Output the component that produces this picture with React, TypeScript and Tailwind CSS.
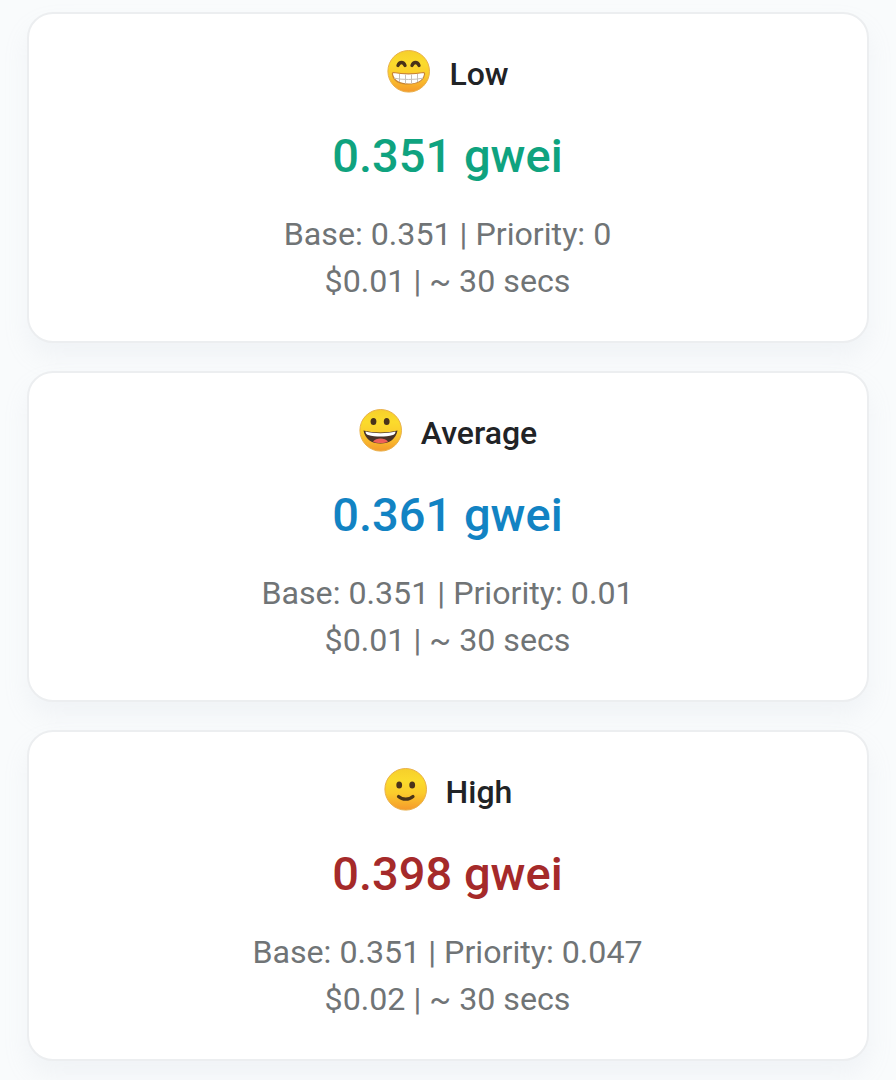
type Mood = 'grin' | 'open' | 'smile';

interface GasTier {
  id: string;
  label: string;
  mood: Mood;
  price: string;
  color: string;
  base: string;
  priority: string;
  cost: string;
}

const tiers: GasTier[] = [
  { id: 'low', label: 'Low', mood: 'grin', price: '0.351', color: 'text-[#0fa37f]', base: '0.351', priority: '0', cost: '$0.01' },
  { id: 'average', label: 'Average', mood: 'open', price: '0.361', color: 'text-[#1283c3]', base: '0.351', priority: '0.01', cost: '$0.01' },
  { id: 'high', label: 'High', mood: 'smile', price: '0.398', color: 'text-[#a52a2a]', base: '0.351', priority: '0.047', cost: '$0.02' },
];

function Face({ mood }: { mood: Mood }) {
  return (
    <svg viewBox="0 0 44 44" className="h-11 w-11 shrink-0" aria-hidden="true">
      <defs>
        <linearGradient id={`face-${mood}`} x1="0" y1="0" x2="0" y2="1">
          <stop offset="0" stopColor="#f6cf2b" />
          <stop offset="0.3" stopColor="#fbdb2c" />
          <stop offset="0.6" stopColor="#fbcb2c" />
          <stop offset="1" stopColor="#f5992c" />
        </linearGradient>
      </defs>
      <circle cx="21.700" cy="21.300" r="20.800" fill={`url(#face-${mood})`} stroke="#e9b04a" />
      {mood === 'grin' && (
        <>
          <path d="M11 15.500c1.500-4 5.500-4 7 0M25 15.500c1.500-4 5.500-4 7 0" fill="none" stroke="#493318" strokeWidth="3.400" strokeLinecap="round" />
          <path d="M6.500 22.500c9 1.700 21 1.700 30 0c1 0 1.200 1 1 2c-1.500 7-7 9.500-16 9.500s-14.500-2.500-16-9.500c-.2-1 0-2 1-2z" fill="#fff" stroke="#c98432" strokeWidth="1.200" />
          <path d="M7 28.200c9 1.700 20 1.700 29 0M12.500 24v8M18.500 24.500v9M24.500 24.500v9M30.500 24v8" fill="none" stroke="#c4bfb8" strokeWidth="1" />
        </>
      )}
      {mood === 'open' && (
        <>
          <ellipse cx="14.500" cy="12.500" rx="2.900" ry="3.500" fill="#49331b" />
          <ellipse cx="27.700" cy="12.500" rx="2.900" ry="3.500" fill="#49331b" />
          <path d="M4.500 21.500c9 2.500 25 2.500 34 0c-1.500 8.500-8 13-17 13s-15.500-4.500-17-13z" fill="#493328" />
          <path d="M6.500 22.400c9 2.300 21 2.300 30 0c0 1.800-1 3-2.500 3.500c-8 2-17 2-25 0c-1.500-.5-2.500-1.700-2.500-3.500z" fill="#fff" />
          <path d="M14 32.500c3-4 12-4 15 0c-3 2-12 2-15 0z" fill="#ef5f58" />
        </>
      )}
      {mood === 'smile' && (
        <>
          <ellipse cx="15.200" cy="17" rx="2.900" ry="3.500" fill="#49331b" />
          <ellipse cx="28.200" cy="17" rx="2.900" ry="3.500" fill="#49331b" />
          <path d="M14.500 28.500c4 3.600 10.500 3.600 14.500 0" fill="none" stroke="#493318" strokeWidth="3.200" strokeLinecap="round" />
        </>
      )}
    </svg>
  );
}

export default function App() {
  return (
    <main className="flex h-[1080px] flex-col gap-7 overflow-hidden bg-[#f9fbfc] px-[27px] pt-3 font-[Roboto,sans-serif]">
      {tiers.map((tier) => (
        <section
          key={tier.id}
          className="flex h-[331px] shrink-0 flex-col items-center rounded-[26px] border-2 border-[#eceef0] bg-white pt-9 text-center shadow-[0_14px_24px_rgba(189,197,209,0.13)]"
        >
          <div className="flex h-11 items-center gap-[18px]">
            <Face mood={tier.mood} />
            <h2 className="pt-1 text-[32px] leading-10 font-medium text-[#212326]">{tier.label}</h2>
          </div>
          <p className={`mt-[34px] pr-px text-[47px] leading-14 font-medium ${tier.color}`}>{tier.price} gwei</p>
          <div className="mt-[27px] pr-px text-[32.2px] leading-[47px] text-[#707476]">
            <p>Base: {tier.base} | Priority: {tier.priority}</p>
            <p>{tier.cost} | ~ 30 secs</p>
          </div>
        </section>
      ))}
    </main>
  );
}
